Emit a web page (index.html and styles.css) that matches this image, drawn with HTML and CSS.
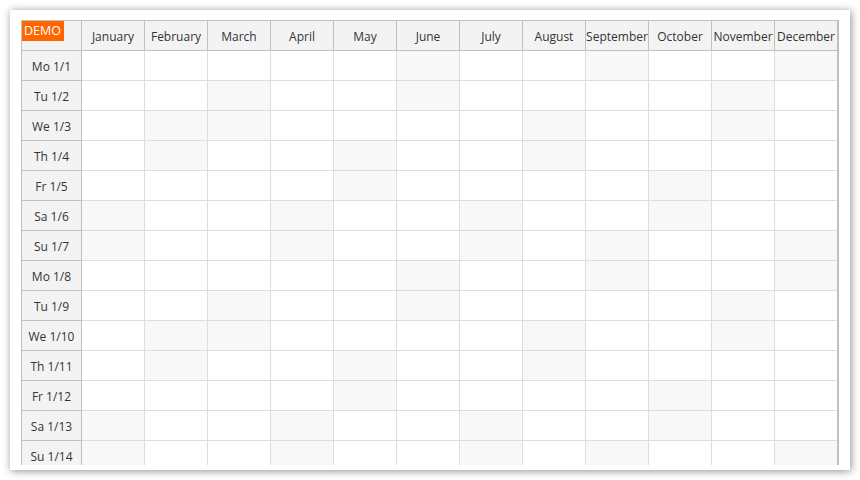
FILE: index.html
```html
<!DOCTYPE html>
<html>
<head>
<meta charset="utf-8">
<link rel="stylesheet" href="styles.css">
</head>
<body>
<div class="panel">
  <div class="grid">
    <div class="corner"><span class="demo">DEMO</span></div>
    <div class="mh">January</div><div class="mh">February</div><div class="mh">March</div><div class="mh">April</div><div class="mh">May</div><div class="mh">June</div><div class="mh">July</div><div class="mh">August</div><div class="mh">September</div><div class="mh">October</div><div class="mh">November</div><div class="mh">December</div>

    <div class="rh">Mo 1/1</div><div class="c"></div><div class="c"></div><div class="c"></div><div class="c"></div><div class="c"></div><div class="c w"></div><div class="c"></div><div class="c"></div><div class="c w"></div><div class="c"></div><div class="c"></div><div class="c w"></div>
    <div class="rh">Tu 1/2</div><div class="c"></div><div class="c"></div><div class="c w"></div><div class="c"></div><div class="c"></div><div class="c w"></div><div class="c"></div><div class="c"></div><div class="c"></div><div class="c"></div><div class="c w"></div><div class="c"></div>
    <div class="rh">We 1/3</div><div class="c"></div><div class="c w"></div><div class="c w"></div><div class="c"></div><div class="c"></div><div class="c"></div><div class="c"></div><div class="c w"></div><div class="c"></div><div class="c"></div><div class="c w"></div><div class="c"></div>
    <div class="rh">Th 1/4</div><div class="c"></div><div class="c w"></div><div class="c"></div><div class="c"></div><div class="c w"></div><div class="c"></div><div class="c"></div><div class="c w"></div><div class="c"></div><div class="c"></div><div class="c"></div><div class="c"></div>
    <div class="rh">Fr 1/5</div><div class="c"></div><div class="c"></div><div class="c"></div><div class="c"></div><div class="c w"></div><div class="c"></div><div class="c"></div><div class="c"></div><div class="c"></div><div class="c w"></div><div class="c"></div><div class="c"></div>
    <div class="rh">Sa 1/6</div><div class="c w"></div><div class="c"></div><div class="c"></div><div class="c w"></div><div class="c"></div><div class="c"></div><div class="c w"></div><div class="c"></div><div class="c"></div><div class="c w"></div><div class="c"></div><div class="c"></div>
    <div class="rh">Su 1/7</div><div class="c w"></div><div class="c"></div><div class="c"></div><div class="c w"></div><div class="c"></div><div class="c"></div><div class="c w"></div><div class="c"></div><div class="c w"></div><div class="c"></div><div class="c"></div><div class="c w"></div>
    <div class="rh">Mo 1/8</div><div class="c"></div><div class="c"></div><div class="c"></div><div class="c"></div><div class="c"></div><div class="c w"></div><div class="c"></div><div class="c"></div><div class="c w"></div><div class="c"></div><div class="c"></div><div class="c w"></div>
    <div class="rh">Tu 1/9</div><div class="c"></div><div class="c"></div><div class="c w"></div><div class="c"></div><div class="c"></div><div class="c w"></div><div class="c"></div><div class="c"></div><div class="c"></div><div class="c"></div><div class="c w"></div><div class="c"></div>
    <div class="rh">We 1/10</div><div class="c"></div><div class="c w"></div><div class="c w"></div><div class="c"></div><div class="c"></div><div class="c"></div><div class="c"></div><div class="c w"></div><div class="c"></div><div class="c"></div><div class="c w"></div><div class="c"></div>
    <div class="rh">Th 1/11</div><div class="c"></div><div class="c w"></div><div class="c"></div><div class="c"></div><div class="c w"></div><div class="c"></div><div class="c"></div><div class="c w"></div><div class="c"></div><div class="c"></div><div class="c"></div><div class="c"></div>
    <div class="rh">Fr 1/12</div><div class="c"></div><div class="c"></div><div class="c"></div><div class="c"></div><div class="c w"></div><div class="c"></div><div class="c"></div><div class="c"></div><div class="c"></div><div class="c w"></div><div class="c"></div><div class="c"></div>
    <div class="rh">Sa 1/13</div><div class="c w"></div><div class="c"></div><div class="c"></div><div class="c w"></div><div class="c"></div><div class="c"></div><div class="c w"></div><div class="c"></div><div class="c"></div><div class="c w"></div><div class="c"></div><div class="c"></div>
    <div class="rh">Su 1/14</div><div class="c w"></div><div class="c"></div><div class="c"></div><div class="c w"></div><div class="c"></div><div class="c"></div><div class="c w"></div><div class="c"></div><div class="c w"></div><div class="c"></div><div class="c"></div><div class="c w"></div>
  </div>
</div>
</body>
</html>
```

FILE: styles.css
```css
html, body {
  margin: 0;
  padding: 0;
  background: #ffffff;
}
body {
  padding: 10px;
  font-family: "Open Sans", "Noto Sans", sans-serif;
  font-size: 12px;
  color: #333333;
}
.panel {
  width: 840px;
  height: 460px;
  box-sizing: border-box;
  padding: 10px 10px 5px 11px;
  background: #ffffff;
  box-shadow: 1px 1px 8px rgba(0, 0, 0, 0.45);
}
.grid {
  width: 818px;
  height: 445px;
  box-sizing: border-box;
  overflow: hidden;
  display: grid;
  grid-template-columns: 60px repeat(12, 63px);
  grid-auto-rows: 30px;
  border-left: 1px solid #c0c0c0;
  border-top: 1px solid #c0c0c0;
  border-right: 1px solid #c0c0c0;
}
.corner, .mh, .rh {
  background: #f3f3f3;
  border-right: 1px solid #c0c0c0;
  border-bottom: 1px solid #c0c0c0;
  box-sizing: border-box;
}
.corner {
  display: flex;
  align-items: flex-start;
  padding: 0;
}
.demo {
  background: #ff6600;
  color: #ffffff;
  font-size: 12.5px;
  line-height: 20px;
  height: 20px;
  padding: 0 3px 0 2px;
}
.mh, .rh {
  display: flex;
  align-items: center;
  justify-content: center;
  white-space: nowrap;
  overflow: hidden;
  padding-top: 1px;
}
.rh {
  padding-top: 2px;
}
.c {
  background: #ffffff;
  border-right: 1px solid #dddddd;
  border-bottom: 1px solid #dddddd;
  box-sizing: border-box;
}
.c.w {
  background: #f8f8f8;
}
.c:nth-child(13n) {
  border-right-color: #c0c0c0;
}
```
